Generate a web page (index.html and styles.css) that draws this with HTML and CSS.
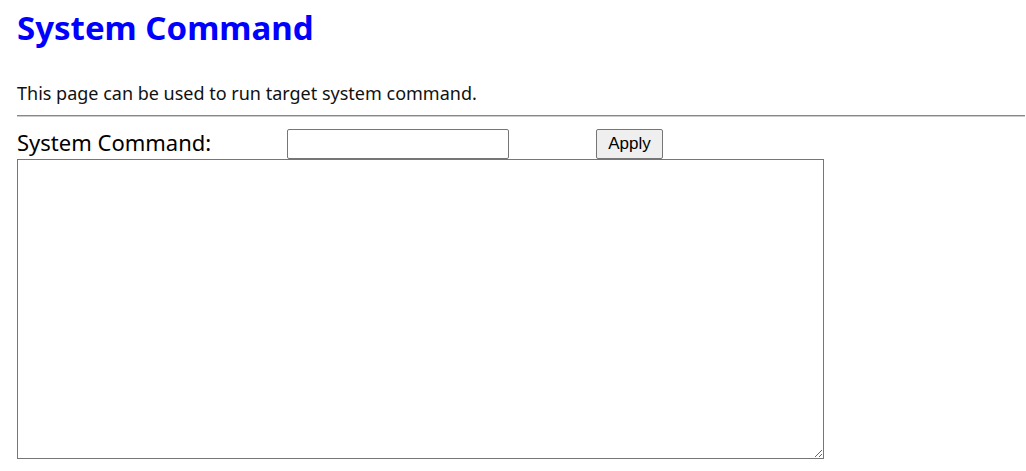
FILE: index.html
```html
<!DOCTYPE html>
<html lang="en">
<head>
    <meta charset="UTF-8">
    <title>System Command</title>
    <link rel="stylesheet" href="styles.css">
</head>
<body>
    <h1>System Command</h1>
    <p class="intro">This page can be used to run target system command.</p>
    <hr>
    <form class="cmd-form" onsubmit="return false;">
        <div class="cmd-row">
            <label class="cmd-label" for="cmd">System Command:</label>
            <div class="cmd-input-cell">
                <input type="text" id="cmd" class="cmd-input">
            </div>
            <button type="submit" class="apply-btn">Apply</button>
        </div>
        <textarea class="cmd-output" readonly></textarea>
    </form>
</body>
</html>
```

FILE: styles.css
```css
body {
    font-family: "Noto Sans", sans-serif;
    margin: 0;
    padding: 0 1px 0 17px;
    color: #000;
}
h1 {
    color: #0000ff;
    font-size: 33px;
    font-weight: bold;
    margin: 8px 0 0 0;
    line-height: 40px;
}
.intro {
    font-size: 18px;
    margin: 33px 0 0 0;
    line-height: 24px;
    color: #111;
}
hr {
    border: none;
    border-top: 1px solid #888;
    border-bottom: 1px solid #ccc;
    margin: 10px 0 0 0;
}
.cmd-row {
    display: flex;
    align-items: center;
    margin-top: 12px;
    height: 30px;
}
.cmd-label {
    width: 270px;
    font-size: 22px;
    align-self: flex-start;
    line-height: 27px;
}
.cmd-input-cell {
    width: 309px;
}
.cmd-input {
    width: 222px;
    height: 30px;
    box-sizing: border-box;
    border: 1px solid #767676;
    border-radius: 2px;
    padding: 1px 2px;
}
.apply-btn {
    height: 30px;
    width: 67px;
    font-family: "Liberation Sans", Arial, sans-serif;
    font-size: 17px;
    background: #efefef;
    border: 1px solid #767676;
    border-radius: 2px;
    padding: 0;
}
.cmd-output {
    display: block;
    width: 807px;
    height: 300px;
    box-sizing: border-box;
    border: 1px solid #767676;
    margin: 0;
    resize: both;
}
```
